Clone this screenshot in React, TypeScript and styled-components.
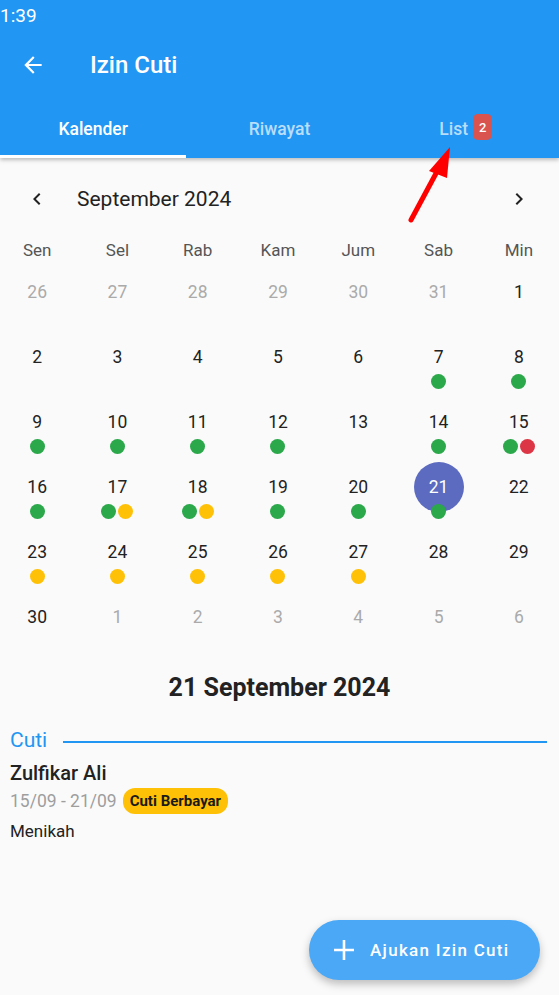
import React from "react";
import styled, { createGlobalStyle } from "styled-components";

const GlobalStyle = createGlobalStyle`
  html, body {
    margin: 0;
    padding: 0;
    background: #fafafa;
    font-family: Roboto, "Noto Sans", sans-serif;
    overflow-x: hidden;
  }
  * { box-sizing: border-box; }
`;

type DotColor = "green" | "yellow" | "red";

interface Day {
  n: number;
  muted?: boolean;
  dots?: DotColor[];
  selected?: boolean;
}

const dotColors: Record<DotColor, string> = {
  green: "#2aa84a",
  yellow: "#ffc107",
  red: "#dc3545",
};

const weekdays = ["Sen", "Sel", "Rab", "Kam", "Jum", "Sab", "Min"];

// calendar data for September 2024
const days: Day[] = [
  { n: 26, muted: true }, { n: 27, muted: true }, { n: 28, muted: true },
  { n: 29, muted: true }, { n: 30, muted: true }, { n: 31, muted: true }, { n: 1 },
  { n: 2 }, { n: 3 }, { n: 4 }, { n: 5 }, { n: 6 },
  { n: 7, dots: ["green"] }, { n: 8, dots: ["green"] },
  { n: 9, dots: ["green"] }, { n: 10, dots: ["green"] }, { n: 11, dots: ["green"] },
  { n: 12, dots: ["green"] }, { n: 13 }, { n: 14, dots: ["green"] },
  { n: 15, dots: ["green", "red"] },
  { n: 16, dots: ["green"] }, { n: 17, dots: ["green", "yellow"] },
  { n: 18, dots: ["green", "yellow"] }, { n: 19, dots: ["green"] },
  { n: 20, dots: ["green"] }, { n: 21, dots: ["green"], selected: true }, { n: 22 },
  { n: 23, dots: ["yellow"] }, { n: 24, dots: ["yellow"] }, { n: 25, dots: ["yellow"] },
  { n: 26, dots: ["yellow"] }, { n: 27, dots: ["yellow"] }, { n: 28 }, { n: 29 },
  { n: 30 }, { n: 1, muted: true }, { n: 2, muted: true }, { n: 3, muted: true },
  { n: 4, muted: true }, { n: 5, muted: true }, { n: 6, muted: true },
];

const Page = styled.div`
  position: relative;
  min-height: 995px;
  background: #fafafa;
`;

const Header = styled.header`
  background: #2196f3;
  color: #fff;
  box-shadow: 0 2px 4px rgba(0, 0, 0, 0.25);
`;

const StatusBar = styled.div`
  height: 30px;
  display: flex;
  align-items: center;
  padding-left: 0;
  font-size: 19px;
`;

const Toolbar = styled.div`
  height: 70px;
  display: flex;
  align-items: center;
  padding-left: 20px;
  gap: 44px;
`;

const Title = styled.h1`
  margin: 0;
  font-size: 24px;
  font-weight: 500;
`;

const Tabs = styled.nav`
  height: 58px;
  display: grid;
  grid-template-columns: repeat(3, 1fr);
`;

const Tab = styled.div<{ active?: boolean }>`
  display: flex;
  align-items: center;
  justify-content: center;
  gap: 5px;
  font-size: 17.5px;
  font-weight: 500;
  padding-top: 2px;
  color: ${(p) => (p.active ? "#fff" : "rgba(255,255,255,0.7)")};
  border-bottom: 3px solid ${(p) => (p.active ? "#fff" : "transparent")};
`;

const Badge = styled.span`
  background: #d9534f;
  color: #fff;
  font-size: 13px;
  font-weight: 500;
  border-radius: 5px;
  padding: 6px 6px 5px;
  margin-top: -4px;
`;

const MonthBar = styled.div`
  height: 70px;
  display: flex;
  align-items: center;
  padding: 12px 28px 0 25px;
  color: #222;
`;

const MonthLabel = styled.div`
  font-size: 21px;
  margin-left: 28px;
  flex: 1;
`;

const Grid = styled.div`
  display: grid;
  grid-template-columns: repeat(7, 1fr);
  margin-left: -3px;
  width: calc(100% + 3px);
`;

const Weekday = styled.div`
  height: 40px;
  display: flex;
  align-items: center;
  justify-content: center;
  padding-top: 3px;
  font-size: 17px;
  color: #555;
`;

const Cell = styled.div`
  height: 65px;
  position: relative;
  display: flex;
  flex-direction: column;
  align-items: center;
`;

const DayNum = styled.div<{ muted?: boolean; selected?: boolean }>`
  margin-top: ${(p) => (p.selected ? "-1px" : "12px")};
  width: ${(p) => (p.selected ? "50px" : "auto")};
  height: ${(p) => (p.selected ? "50px" : "24px")};
  border-radius: 50%;
  display: flex;
  align-items: center;
  justify-content: center;
  font-size: 17.5px;
  background: ${(p) => (p.selected ? "#5c6bc0" : "transparent")};
  color: ${(p) => (p.selected ? "#fff" : p.muted ? "#aaa" : "#222")};
`;

const Dots = styled.div`
  position: absolute;
  top: 41px;
  display: flex;
  gap: 2px;
`;

const Dot = styled.span<{ color: DotColor }>`
  width: 15px;
  height: 15px;
  border-radius: 50%;
  background: ${(p) => dotColors[p.color]};
`;

const DateHeading = styled.h2`
  margin: 15px 0 0;
  text-align: center;
  font-size: 25px;
  font-weight: 700;
  color: #222;
  height: 30px;
`;

const Section = styled.div`
  display: flex;
  align-items: center;
  gap: 16px;
  padding: 0 12px 0 10px;
  margin-top: 25px;
`;

const SectionTitle = styled.span`
  color: #2196f3;
  font-size: 21px;
`;

const SectionLine = styled.span`
  flex: 1;
  height: 2px;
  background: #2196f3;
  margin-top: 3px;
`;

const Entry = styled.div`
  padding: 9px 10px 0;
  color: #222;
`;

const Name = styled.div`
  font-size: 20px;
  font-weight: 500;
`;

const Meta = styled.div`
  display: flex;
  align-items: center;
  gap: 6px;
  margin-top: 3px;
  font-size: 17.5px;
  color: #9e9e9e;
`;

const Tag = styled.span`
  background: #ffc107;
  color: #1a1a1a;
  font-size: 15px;
  font-weight: 700;
  border-radius: 12px;
  padding: 4px 7px;
`;

const Note = styled.div`
  margin-top: 7px;
  font-size: 17px;
`;

const Fab = styled.button`
  position: absolute;
  right: 19px;
  top: 920px;
  width: 231px;
  height: 60px;
  border: none;
  border-radius: 30px;
  background: #4aa8f6;
  color: #fff;
  display: flex;
  align-items: center;
  padding-left: 24px;
  gap: 15px;
  font-family: Roboto, sans-serif;
  font-size: 17px;
  font-weight: 500;
  letter-spacing: 1.3px;
  box-shadow: 0 4px 8px rgba(0, 0, 0, 0.25);
`;

const Annotation = styled.svg`
  position: absolute;
  left: 400px;
  top: 140px;
  pointer-events: none;
`;

const App = () => {
  return (
    <Page>
      <GlobalStyle />
      <Header>
        <StatusBar>1:39</StatusBar>
        <Toolbar>
          <svg width="26" height="26" viewBox="0 0 24 24">
            <path d="M20 11H7.83l5.59-5.59L12 4l-8 8 8 8 1.41-1.41L7.83 13H20v-2z" fill="#fff" />
          </svg>
          <Title>Izin Cuti</Title>
        </Toolbar>
        <Tabs>
          <Tab active>Kalender</Tab>
          <Tab>Riwayat</Tab>
          <Tab>
            List <Badge>2</Badge>
          </Tab>
        </Tabs>
      </Header>

      <MonthBar>
        <svg width="24" height="24" viewBox="0 0 24 24">
          <path d="M15.41 7.41 14 6l-6 6 6 6 1.41-1.41L10.83 12z" fill="#222" />
        </svg>
        <MonthLabel>September 2024</MonthLabel>
        <svg width="24" height="24" viewBox="0 0 24 24">
          <path d="M10 6 8.59 7.41 13.17 12l-4.58 4.59L10 18l6-6z" fill="#222" />
        </svg>
      </MonthBar>

      <Grid>
        {weekdays.map((w) => (
          <Weekday key={w}>{w}</Weekday>
        ))}
        {days.map((d, i) => (
          <Cell key={i}>
            <DayNum muted={d.muted} selected={d.selected}>
              {d.n}
            </DayNum>
            {d.dots && (
              <Dots>
                {d.dots.map((c, j) => (
                  <Dot key={j} color={c} />
                ))}
              </Dots>
            )}
          </Cell>
        ))}
      </Grid>

      <DateHeading>21 September 2024</DateHeading>

      <Section>
        <SectionTitle>Cuti</SectionTitle>
        <SectionLine />
      </Section>
      <Entry>
        <Name>Zulfikar Ali</Name>
        <Meta>
          15/09 - 21/09 <Tag>Cuti Berbayar</Tag>
        </Meta>
        <Note>Menikah</Note>
      </Entry>

      <Fab>
        <svg width="22" height="22" viewBox="0 0 22 22">
          <path d="M11 1v20M1 11h20" stroke="#fff" strokeWidth="2.6" />
        </svg>
        Ajukan Izin Cuti
      </Fab>

      {/* red annotation arrow pointing to the List tab */}
      <Annotation width="70" height="90" viewBox="0 0 70 90">
        <line x1="11" y1="80" x2="40" y2="26" stroke="#ff0000" strokeWidth="5" strokeLinecap="round" />
        <polygon points="50,7 29,31 47,38" fill="#ff0000" />
      </Annotation>
    </Page>
  );
};

export default App;
